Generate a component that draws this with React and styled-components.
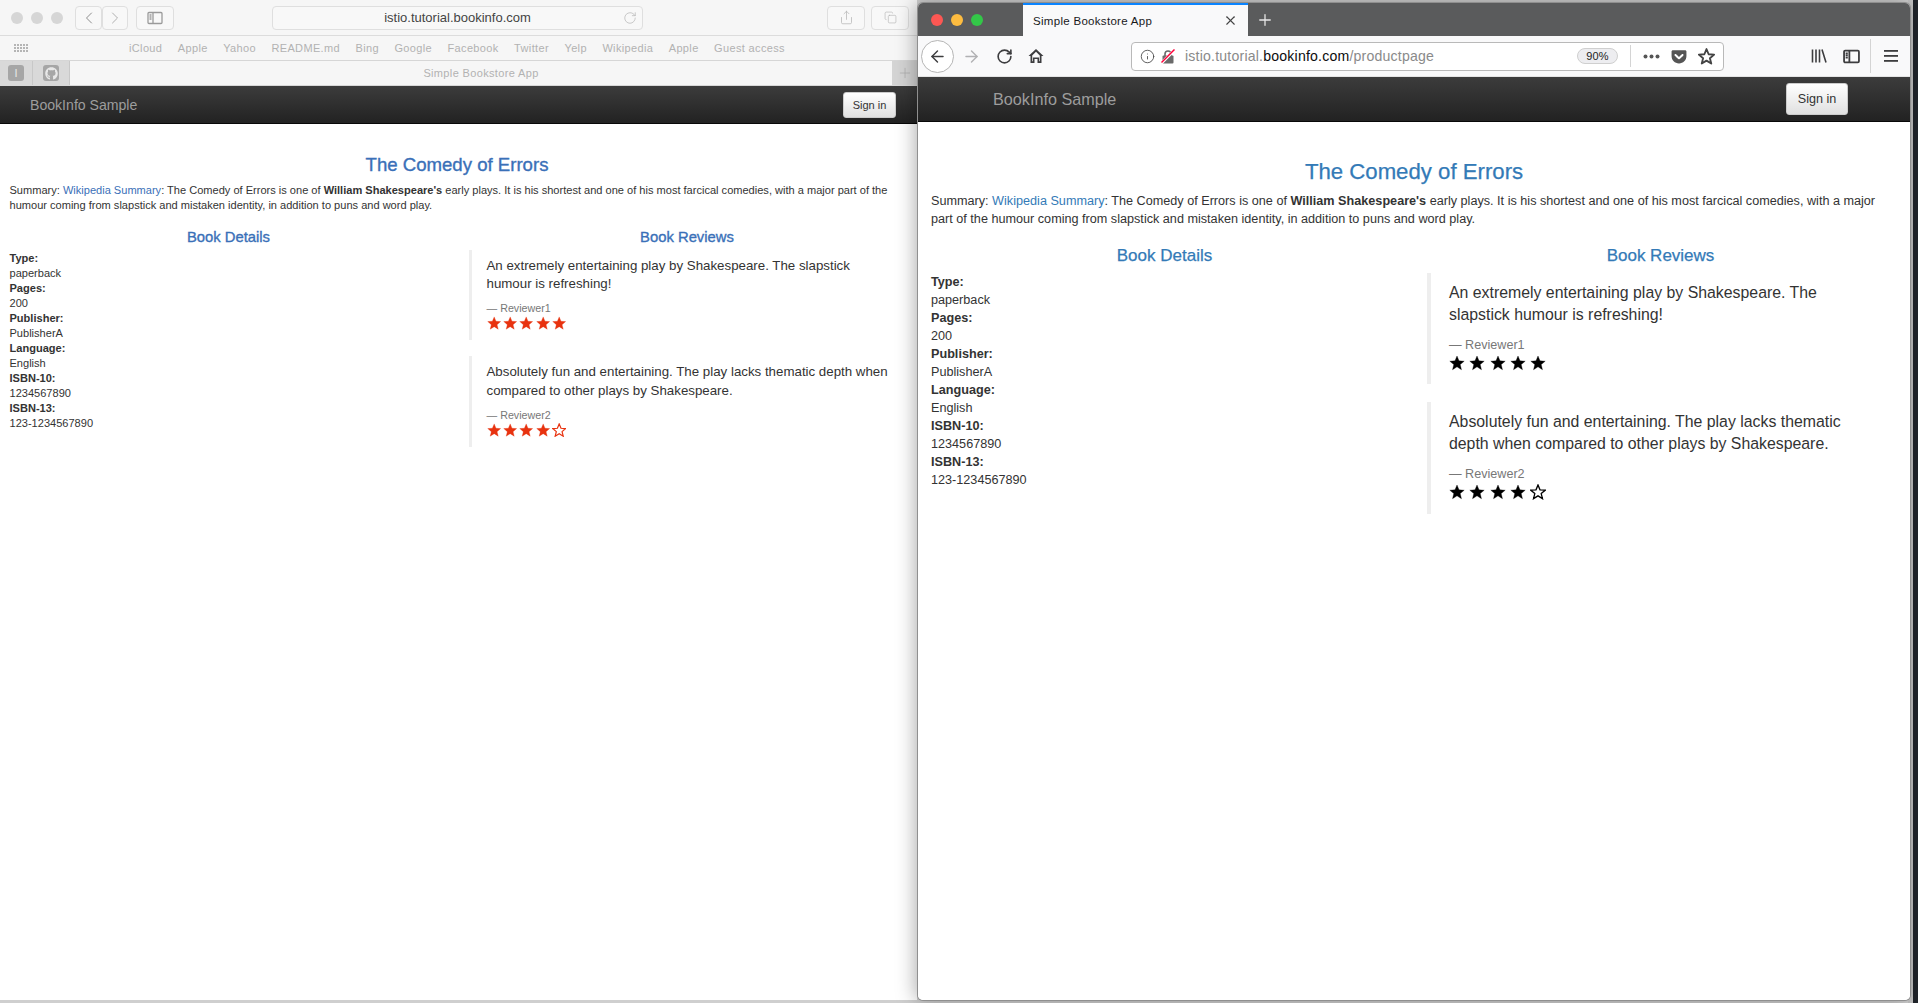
import styled, { createGlobalStyle } from 'styled-components';
import {
  ChevronLeft,
  ChevronRight,
  RotateCw,
  Share,
  Copy,
  Plus,
  X,
  ArrowLeft,
  ArrowRight,
  Info,
} from 'lucide-react';
import { FaGithub, FaGetPocket } from 'react-icons/fa';

const GlobalStyle = createGlobalStyle`
  html, body {
    margin: 0;
    padding: 0;
    height: 100%;
    overflow: hidden;
  }
  body {
    font-family: "Liberation Sans", Arial, sans-serif;
  }
`;

// sizes of the same page at the two browser zoom levels
const safariPage = {
  barHeight: 38,
  brandSize: 14.1,
  brandPad: 30,
  btnW: 53,
  btnH: 26,
  btnSize: 11,
  btnRight: 21,
  titleSize: 18.6,
  titleTop: 29,
  titleLine: 24,
  titleStroke: 0.35,
  titleShift: 3,
  base: 11.05,
  summaryLine: 15,
  summaryTop: 6,
  summaryRight: 10,
  padX: 9.5,
  headSize: 14.8,
  headLine: 16,
  headTop: 15.6,
  listTop: 6,
  listLine: 15,
  colLeft: 457,
  quoteRight: 24,
  quoteTop: 5,
  quoteBorder: 3,
  quotePad: 14.5,
  quoteSize: 13.3,
  quoteLine: 18.4,
  quoteTextTop: 7,
  quoteAfter: 16,
  whoSize: 10.7,
  whoLine: 14,
  whoTop: 7.6,
  starSize: 14.4,
  starGap: 2,
  starsTop: 1,
  quoteBottom: 10,
  starColor: '#e8320f',
  linkColor: '#3a70b8',
  quoteLeft: 12,
};

const firefoxPage = {
  barHeight: 45,
  brandSize: 16.2,
  brandPad: 75,
  btnW: 62,
  btnH: 32,
  btnSize: 12.6,
  btnRight: 62,
  titleSize: 22.2,
  titleTop: 36,
  titleLine: 28,
  titleStroke: 0.25,
  titleShift: 0,
  base: 12.65,
  summaryLine: 18.35,
  summaryTop: 6,
  summaryRight: 20,
  padX: 13,
  headSize: 17,
  headLine: 18,
  headTop: 18.5,
  listTop: 8,
  listLine: 18,
  colLeft: 493,
  quoteRight: 50,
  quoteTop: 7.7,
  quoteBorder: 4,
  quotePad: 18,
  quoteSize: 15.85,
  quoteLine: 22,
  quoteTextTop: 9,
  quoteAfter: 18,
  whoSize: 12.6,
  whoLine: 18,
  whoTop: 9.7,
  starSize: 16,
  starGap: 4.3,
  starsTop: 1.5,
  quoteBottom: 13.2,
  starColor: '#000',
  linkColor: '#337ab7',
  quoteLeft: 16,
};

const Desktop = styled.div`
  width: 1918px;
  height: 1003px;
  display: flex;
  overflow: hidden;
  background: linear-gradient(90deg, #cfcfcf 0 1908px, #c4c4c4 1908px 1913px, #20242a 1913px);
`;

const SafariWindow = styled.section`
  width: 917px;
  height: 1000px;
  flex: none;
  background: #fff;
  display: flex;
  flex-direction: column;
  border-bottom-left-radius: 5px;
`;

const FirefoxWindow = styled.section`
  width: 992px;
  height: 997px;
  margin: 3px 0 0 1px;
  flex: none;
  background: #fff;
  display: flex;
  flex-direction: column;
  border-radius: 5px;
  overflow: hidden;
  box-shadow: 0 0 0 1px #8f8f8f, -2px 0 20px rgba(0, 0, 0, 0.35);
  position: relative;
`;

const SafariToolbar = styled.div`
  height: 35px;
  flex: none;
  display: flex;
  align-items: center;
  padding: 0 8px 0 11px;
  background: #f6f6f6;
  border-bottom: 1px solid #dcdcdc;
`;

const Lights = styled.div`
  display: flex;
  align-items: center;
  gap: ${(p) => p.$gap}px;
  margin-right: ${(p) => p.$after || 0}px;
  padding-left: ${(p) => p.$before || 0}px;
`;

const Light = styled.span`
  width: 12px;
  height: 12px;
  border-radius: 50%;
  background: ${(p) => p.$color};
`;

const ToolButton = styled.div`
  width: ${(p) => p.$w}px;
  height: 24px;
  margin-left: ${(p) => p.$ml || 0}px;
  flex: none;
  display: flex;
  align-items: center;
  justify-content: center;
  border: 1px solid #dfdfdf;
  border-radius: 4px;
  box-sizing: border-box;
  background: #f8f8f8;
  color: ${(p) => p.$color || '#b0b0b0'};
`;

const UrlBox = styled.div`
  width: 371px;
  height: 24px;
  margin-left: 98px;
  margin-right: 184px;
  flex: none;
  box-sizing: border-box;
  border: 1px solid #dfdfdf;
  border-radius: 4px;
  background: #f8f8f8;
  font-size: 13px;
  color: #444;
  display: flex;
  align-items: center;
  justify-content: center;
  position: relative;
`;

const ReloadIcon = styled.span`
  position: absolute;
  right: 5px;
  top: 4px;
  color: #b5b5b5;
  display: flex;
`;

const Favorites = styled.div`
  height: 24px;
  flex: none;
  display: flex;
  align-items: center;
  padding-left: 14px;
  background: #f6f6f6;
  border-bottom: 1px solid #d6d6d6;
`;

const AppsGrid = styled.div`
  display: grid;
  grid-template-columns: repeat(5, 2px);
  grid-auto-rows: 2px;
  gap: 1px;
  margin-right: 101px;

  span {
    background: #b5b5b5;
  }
`;

const FavLink = styled.span`
  font-size: 11px;
  letter-spacing: 0.35px;
  color: #b2b2b2;
  margin-right: 15.5px;
  white-space: nowrap;
`;

const TabStrip = styled.div`
  height: 25px;
  flex: none;
  display: flex;
  background: #f6f6f6;
  border-bottom: 1px solid #d8d8d8;
  box-sizing: border-box;
`;

const PinnedTab = styled.div`
  width: ${(p) => p.$w}px;
  flex: none;
  display: flex;
  align-items: center;
  justify-content: center;
  background: #d9d9d9;
  border-right: 1px solid #c8c8c8;
  box-sizing: border-box;
`;

const PinnedIcon = styled.span`
  width: 16px;
  height: 16px;
  border-radius: 3px;
  background: #a6a6a6;
  color: #e8e8e8;
  display: flex;
  align-items: center;
  justify-content: center;
  font-size: 11px;
`;

const TabTitle = styled.div`
  flex: 1;
  font-size: 11px;
  letter-spacing: 0.35px;
  color: #b2b2b2;
  display: flex;
  align-items: center;
  justify-content: center;
`;

const NewTabCell = styled.div`
  width: 25px;
  flex: none;
  background: #d4d4d4;
  color: #a9a9a9;
  display: flex;
  align-items: center;
  justify-content: center;
`;

const FoxTabBar = styled.div`
  height: 33px;
  flex: none;
  display: flex;
  background: #5a5b5c;
`;

const FoxTab = styled.div`
  width: 225px;
  margin-left: 40px;
  flex: none;
  box-sizing: border-box;
  border-top: 2px solid #0a84ff;
  background: #f9f9fa;
  color: #18181a;
  font-size: 11.5px;
  letter-spacing: 0.3px;
  display: flex;
  align-items: center;
  justify-content: space-between;
  padding: 0 10px;
`;

const FoxNewTab = styled.div`
  width: 34px;
  color: #e8e8e8;
  display: flex;
  align-items: center;
  justify-content: center;
`;

const FoxToolbar = styled.div`
  height: 41px;
  flex: none;
  display: flex;
  align-items: center;
  background: #f9f9fa;
  color: #3d3d3f;
  box-sizing: border-box;
  border-bottom: 1px solid #e5e5e5;
  padding-left: 3px;
`;

const BackCircle = styled.div`
  width: 33px;
  height: 33px;
  border-radius: 50%;
  border: 1px solid #b5b5b5;
  background: #fff;
  box-sizing: border-box;
  flex: none;
  display: flex;
  align-items: center;
  justify-content: center;
`;

const FoxIcon = styled.span`
  width: ${(p) => p.$w || 32}px;
  margin-left: ${(p) => p.$ml || 0}px;
  flex: none;
  display: flex;
  align-items: center;
  justify-content: center;
  color: ${(p) => p.$color || 'inherit'};
`;

const AddressBar = styled.div`
  width: 593px;
  height: 29px;
  margin-left: 79px;
  flex: none;
  box-sizing: border-box;
  border: 1px solid #b9b9b9;
  border-radius: 4px;
  background: #fff;
  display: flex;
  align-items: center;
  padding-left: 8px;
  font-size: 14.1px;
  letter-spacing: 0.2px;
  color: #8a8a8a;

  b {
    font-weight: 400;
    color: #0c0c0d;
  }
`;

const AddressText = styled.span`
  margin-left: 4px;
  flex: 1;
  white-space: nowrap;
`;

const ZoomPill = styled.span`
  width: 41px;
  height: 16px;
  margin-right: 12px;
  border-radius: 8px;
  background: #ededf0;
  border: 1px solid #cfcfcf;
  box-sizing: border-box;
  color: #222;
  font-size: 11px;
  display: flex;
  align-items: center;
  justify-content: center;
`;

const Divider = styled.span`
  width: 1px;
  height: ${(p) => p.$h}px;
  margin-left: ${(p) => p.$ml || 0}px;
  background: #d4d4d4;
  flex: none;
`;

const Page = styled.main`
  flex: 1;
  min-height: 0;
  display: flex;
  flex-direction: column;
  background: #fff;
  color: #333;
`;

const Navbar = styled.nav`
  height: ${(p) => p.$m.barHeight}px;
  flex: none;
  box-sizing: border-box;
  display: flex;
  align-items: center;
  justify-content: space-between;
  padding: 0 ${(p) => p.$m.btnRight}px 0 ${(p) => p.$m.brandPad}px;
  background: linear-gradient(#3c3c3c, #222);
  border-bottom: 1px solid #080808;
`;

const Brand = styled.span`
  font-size: ${(p) => p.$m.brandSize}px;
  color: #9d9d9d;
`;

const SignIn = styled.button`
  width: ${(p) => p.$m.btnW}px;
  height: ${(p) => p.$m.btnH}px;
  padding: 0;
  font: inherit;
  font-size: ${(p) => p.$m.btnSize}px;
  color: #333;
  border: 1px solid #ccc;
  border-radius: 3px;
  background: linear-gradient(#fff, #e0e0e0);
`;

const Title = styled.h3`
  margin: ${(p) => p.$m.titleTop}px 0 0;
  padding-right: ${(p) => p.$m.titleShift}px;
  font-size: ${(p) => p.$m.titleSize}px;
  line-height: ${(p) => p.$m.titleLine}px;
  font-weight: 500;
  text-align: center;
  color: ${(p) => p.$m.linkColor};
  -webkit-text-stroke: ${(p) => p.$m.titleStroke}px ${(p) => p.$m.linkColor};
`;

const Summary = styled.p`
  margin: ${(p) => p.$m.summaryTop}px 0 0;
  padding: 0 ${(p) => p.$m.summaryRight}px 0 ${(p) => p.$m.padX}px;
  font-size: ${(p) => p.$m.base}px;
  line-height: ${(p) => p.$m.summaryLine}px;

  a {
    color: ${(p) => p.$m.linkColor};
    text-decoration: none;
  }
`;

const Columns = styled.div`
  display: grid;
  grid-template-columns: ${(p) => p.$m.colLeft}px 1fr;
`;

const ColumnHead = styled.h4`
  margin: ${(p) => p.$m.headTop}px 0 0;
  font-size: ${(p) => p.$m.headSize}px;
  line-height: ${(p) => p.$m.headLine}px;
  font-weight: 500;
  text-align: center;
  color: ${(p) => p.$m.linkColor};
  -webkit-text-stroke: ${(p) => p.$m.titleStroke}px ${(p) => p.$m.linkColor};
`;

const Details = styled.dl`
  margin: ${(p) => p.$m.listTop}px 0 0;
  padding-left: ${(p) => p.$m.padX}px;
  font-size: ${(p) => p.$m.base}px;
  line-height: ${(p) => p.$m.listLine}px;

  dt {
    font-weight: 700;
  }
  dd {
    margin: 0;
  }
`;

const Quote = styled.blockquote`
  margin: ${(p) => p.$m.quoteTop}px ${(p) => p.$m.quoteRight}px ${(p) => p.$m.quoteAfter}px
    ${(p) => p.$m.quoteLeft}px;
  padding: ${(p) => p.$m.quoteTextTop}px 0 ${(p) => p.$m.quoteBottom}px ${(p) => p.$m.quotePad}px;
  border-left: ${(p) => p.$m.quoteBorder}px solid #eee;
  font-size: ${(p) => p.$m.quoteSize}px;
  line-height: ${(p) => p.$m.quoteLine}px;

  p {
    margin: 0;
  }
  small {
    display: block;
    margin-top: ${(p) => p.$m.whoTop}px;
    font-size: ${(p) => p.$m.whoSize}px;
    line-height: ${(p) => p.$m.whoLine}px;
    color: #777;
  }
`;

const Stars = styled.div`
  display: flex;
  gap: ${(p) => p.$m.starGap}px;
  margin-top: ${(p) => p.$m.starsTop}px;
  color: ${(p) => p.$m.starColor};
`;

const STAR_POINTS = '12,1.5 15,8.8 22.8,9.3 16.8,14.4 18.7,22 12,17.8 5.3,22 7.2,14.4 1.2,9.3 9,8.8';

const Star = ({ size, filled }) => (
  <svg width={size} height={size} viewBox="0 0 24 24">
    <polygon
      points={STAR_POINTS}
      fill={filled ? 'currentColor' : 'none'}
      stroke="currentColor"
      strokeWidth={filled ? 0.5 : 2}
    />
  </svg>
);

const reviews = [
  {
    text: 'An extremely entertaining play by Shakespeare. The slapstick humour is refreshing!',
    who: 'Reviewer1',
    stars: 5,
  },
  {
    text: 'Absolutely fun and entertaining. The play lacks thematic depth when compared to other plays by Shakespeare.',
    who: 'Reviewer2',
    stars: 4,
  },
];

const details = [
  ['Type:', 'paperback'],
  ['Pages:', '200'],
  ['Publisher:', 'PublisherA'],
  ['Language:', 'English'],
  ['ISBN-10:', '1234567890'],
  ['ISBN-13:', '123-1234567890'],
];

const BookPage = ({ m }) => (
  <Page>
    <Navbar $m={m}>
      <Brand $m={m}>BookInfo Sample</Brand>
      <SignIn $m={m}>Sign in</SignIn>
    </Navbar>
    <Title $m={m}>The Comedy of Errors</Title>
    <Summary $m={m}>
      Summary: <a href="#wiki">Wikipedia Summary</a>: The Comedy of Errors is one of{' '}
      <b>William Shakespeare's</b> early plays. It is his shortest and one of his most farcical
      comedies, with a major part of the humour coming from slapstick and mistaken identity, in
      addition to puns and word play.
    </Summary>
    <Columns $m={m}>
      <div>
        <ColumnHead $m={m}>Book Details</ColumnHead>
        <Details $m={m}>
          {details.map(([k, v]) => (
            <div key={k}>
              <dt>{k}</dt>
              <dd>{v}</dd>
            </div>
          ))}
        </Details>
      </div>
      <div>
        <ColumnHead $m={m}>Book Reviews</ColumnHead>
        {reviews.map((r) => (
          <Quote key={r.who} $m={m}>
            <p>{r.text}</p>
            <small>— {r.who}</small>
            <Stars $m={m}>
              {[1, 2, 3, 4, 5].map((n) => (
                <Star key={n} size={m.starSize} filled={n <= r.stars} />
              ))}
            </Stars>
          </Quote>
        ))}
      </div>
    </Columns>
  </Page>
);

const SidebarIcon = ({ size = 16, stroke = 1.3 }) => (
  <svg width={size} height={size} viewBox="0 0 16 16" fill="none" stroke="currentColor" strokeWidth={stroke}>
    <rect x="1" y="2.5" width="14" height="11" rx="1" />
    <path d="M6 2.5v11M2.5 5h2M2.5 7h2M2.5 9h2" />
  </svg>
);

const LockOff = () => (
  <svg width="14" height="15" viewBox="0 0 14 15">
    <path d="M4 7V5a3 3 0 0 1 6 0v2" fill="none" stroke="#6a6a6a" strokeWidth="1.6" />
    <rect x="1.5" y="6.5" width="11" height="8" rx="1" fill="#6a6a6a" />
    <path d="M0.5 14L13.5 1" stroke="#fff" strokeWidth="3" />
    <path d="M0.5 13.5L13.5 0.5" stroke="#ff0039" strokeWidth="1.5" />
  </svg>
);

const HomeIcon = () => (
  <svg width="16" height="16" viewBox="0 0 16 16">
    <path
      d="M8 1L.5 8h2v7h4v-4h3v4h4V8h2zM4.2 7.6L8 3.8l3.8 3.8v5.7h-.7V9.500H4.900v3.800h-.7z"
      fill="currentColor"
      fillRule="evenodd"
    />
  </svg>
);

const LibraryIcon = () => (
  <svg width="16" height="14" viewBox="0 0 16 14" fill="none" stroke="currentColor" strokeWidth="1.6">
    <path d="M1.500 0.500v13M5 0.500v13M8.500 0.500v13M11 0.500l4 13" />
  </svg>
);

const MenuIcon = () => (
  <svg width="14" height="12" viewBox="0 0 14 12" fill="currentColor">
    <rect y="0" width="14" height="1.800" />
    <rect y="5" width="14" height="1.800" />
    <rect y="10" width="14" height="1.800" />
  </svg>
);

const favorites = [
  'iCloud',
  'Apple',
  'Yahoo',
  'README.md',
  'Bing',
  'Google',
  'Facebook',
  'Twitter',
  'Yelp',
  'Wikipedia',
  'Apple',
  'Guest access',
];

const App = () => (
  <Desktop>
    <GlobalStyle />
    <SafariWindow>
      <SafariToolbar>
        <Lights $gap={8} $after={12}>
          <Light $color="#d6d6d6" />
          <Light $color="#d6d6d6" />
          <Light $color="#d6d6d6" />
        </Lights>
        <ToolButton $w={27} $color="#8e8e8e">
          <ChevronLeft size={20} strokeWidth={1.2} />
        </ToolButton>
        <ToolButton $w={26}>
          <ChevronRight size={20} strokeWidth={1.2} />
        </ToolButton>
        <ToolButton $w={38} $ml={8} $color="#9a9a9a">
          <SidebarIcon />
        </ToolButton>
        <UrlBox>
          istio.tutorial.bookinfo.com
          <ReloadIcon>
            <RotateCw size={14} strokeWidth={1.2} />
          </ReloadIcon>
        </UrlBox>
        <ToolButton $w={38} $color="#b5b5b5">
          <Share size={15} strokeWidth={1.2} />
        </ToolButton>
        <ToolButton $w={38} $ml={6} $color="#b5b5b5">
          <Copy size={13} strokeWidth={1.2} />
        </ToolButton>
      </SafariToolbar>
      <Favorites>
        <AppsGrid>
          {Array.from({ length: 15 }, (_, i) => (
            <span key={i} />
          ))}
        </AppsGrid>
        {favorites.map((f, i) => (
          <FavLink key={i}>{f}</FavLink>
        ))}
      </Favorites>
      <TabStrip>
        <PinnedTab $w={33}>
          <PinnedIcon>I</PinnedIcon>
        </PinnedTab>
        <PinnedTab $w={37}>
          <PinnedIcon>
            <FaGithub size={13} />
          </PinnedIcon>
        </PinnedTab>
        <TabTitle>Simple Bookstore App</TabTitle>
        <NewTabCell>
          <Plus size={16} strokeWidth={1} />
        </NewTabCell>
      </TabStrip>
      <BookPage m={safariPage} />
    </SafariWindow>

    <FirefoxWindow>
      <FoxTabBar>
        <Lights $gap={8} $before={13}>
          <Light $color="#fc5753" />
          <Light $color="#fdbc40" />
          <Light $color="#33c748" />
        </Lights>
        <FoxTab>
          Simple Bookstore App
          <X size={15} strokeWidth={1.7} color="#444" />
        </FoxTab>
        <FoxNewTab>
          <Plus size={18} strokeWidth={1.7} />
        </FoxNewTab>
      </FoxTabBar>
      <FoxToolbar>
        <BackCircle>
          <ArrowLeft size={19} strokeWidth={1.8} />
        </BackCircle>
        <FoxIcon $w={34} $color="#b1b1b3">
          <ArrowRight size={19} strokeWidth={1.8} />
        </FoxIcon>
        <FoxIcon $w={32}>
          <RotateCw size={17} strokeWidth={2.3} />
        </FoxIcon>
        <FoxIcon $w={32}>
          <HomeIcon />
        </FoxIcon>
        <AddressBar>
          <Info size={15} strokeWidth={1.4} color="#4a4a4a" />
          <FoxIcon $w={26}>
            <LockOff />
          </FoxIcon>
          <AddressText>
            istio.tutorial.<b>bookinfo.com</b>/productpage
          </AddressText>
          <ZoomPill>90%</ZoomPill>
          <Divider $h={22} />
          <FoxIcon $w={40}>
            <svg width="17" height="5" viewBox="0 0 17 5" fill="#555">
              <circle cx="2.500" cy="2.500" r="2" />
              <circle cx="8.500" cy="2.500" r="2" />
              <circle cx="14.500" cy="2.500" r="2" />
            </svg>
          </FoxIcon>
          <FoxIcon $w={16} $color="#555">
            <FaGetPocket size={17} />
          </FoxIcon>
          <FoxIcon $w={34} $ml={2}>
            <svg width="17" height="17" viewBox="0 0 24 24">
              <polygon points={STAR_POINTS} fill="none" stroke="#444" strokeWidth="2.600" strokeLinejoin="round" />
            </svg>
          </FoxIcon>
        </AddressBar>
        <FoxIcon $w={32} $ml={79}>
          <LibraryIcon />
        </FoxIcon>
        <FoxIcon $w={32}>
          <SidebarIcon size={17} stroke={1.7} />
        </FoxIcon>
        <Divider $h={34} $ml={3} />
        <FoxIcon $w={39}>
          <MenuIcon />
        </FoxIcon>
      </FoxToolbar>
      <BookPage m={firefoxPage} />
    </FirefoxWindow>
  </Desktop>
);

export default App;
